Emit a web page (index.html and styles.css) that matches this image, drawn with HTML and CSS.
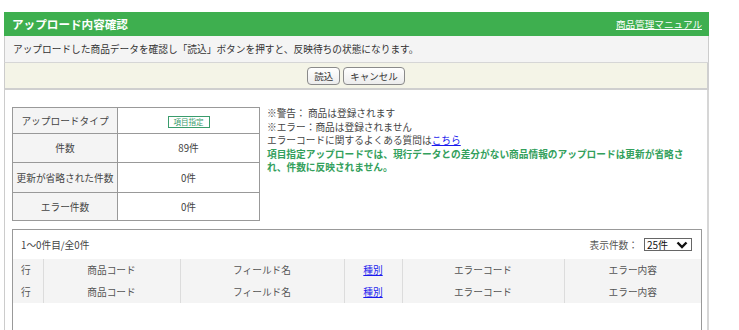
FILE: index.html
```html
<!DOCTYPE html>
<html lang="ja">
<head>
<meta charset="utf-8">
<link rel="stylesheet" href="styles.css">
</head>
<body>
<div class="panel">
  <div class="head">
    <h1 class="title">アップロード内容確認</h1>
    <a class="manual" href="#">商品管理マニュアル</a>
  </div>
  <div class="desc">アップロードした商品データを確認し「読込」ボタンを押すと、反映待ちの状態になります。</div>
  <div class="bar">
    <button class="btn">読込</button>
    <button class="btn">キャンセル</button>
  </div>
  <div class="content">
    <div class="summary">
      <table class="info">
        <tr class="r1"><th>アップロードタイプ</th><td><span class="tag">項目指定</span></td></tr>
        <tr class="r2"><th>件数</th><td>89件</td></tr>
        <tr class="r3"><th>更新が省略された件数</th><td>0件</td></tr>
        <tr class="r4"><th>エラー件数</th><td>0件</td></tr>
      </table>
      <div class="notes">
        <p>※警告： 商品は登録されます</p>
        <p>※エラー：商品は登録されません</p>
        <p>エラーコードに関するよくある質問は<a href="#">こちら</a></p>
        <p class="strong">項目指定アップロードでは、現行データとの差分がない商品情報のアップロードは更新が省略され、件数に反映されません。</p>
      </div>
    </div>
    <div class="listbox">
      <div class="listhead">
        <span>1～0件目/全0件</span>
        <label class="perpage">表示件数：
          <span class="sel">25件<svg width="12" height="8" viewBox="0 0 12 8"><path d="M1.5 1.5 L6 6 L10.5 1.5" fill="none" stroke="#111" stroke-width="2.4"/></svg></span>
        </label>
      </div>
      <table class="grid">
        <colgroup><col class="c1"><col class="c2"><col class="c3"><col class="c4"><col class="c5"><col class="c6"></colgroup>
        <tr><th class="first">行</th><th>商品コード</th><th>フィールド名</th><th><a href="#">種別</a></th><th>エラーコード</th><th>エラー内容</th></tr>
        <tr><th class="first">行</th><th>商品コード</th><th>フィールド名</th><th><a href="#">種別</a></th><th>エラーコード</th><th>エラー内容</th></tr>
      </table>
    </div>
  </div>
</div>
</body>
</html>
```

FILE: styles.css
```css
html, body { margin: 0; padding: 0; background: #fff; }
body {
  font-family: "Noto Sans CJK JP", "Noto Sans", sans-serif;
  font-size: 9.7px;
  color: #333;
  height: 330px;
  overflow: hidden;
}
.panel {
  width: 705px;
  margin: 12px 0 0 4px;
}
.head {
  background: #3eaf4f;
  height: 24px;
  display: flex;
  align-items: center;
  justify-content: space-between;
  padding: 0 7px 0 8px;
}
.title {
  margin: 0;
  color: #fff;
  font-size: 11.6px;
  font-weight: bold;
}
.manual { color: #fff; font-size: 9.6px; }
.desc {
  background: #f4f4f4;
  height: 26px;
  line-height: 26px;
  padding-left: 8px;
  border-left: 1px solid #ccc;
  border-right: 1px solid #ccc;
  border-bottom: 1px solid #d6d6d6;
}
.bar {
  background: #f4f4e7;
  height: 25px;
  border-left: 1px solid #ccc;
  border-right: 2px solid #cfcfcf;
  border-bottom: 2px solid #cfcfcf;
  display: flex;
  justify-content: center;
  align-items: center;
  gap: 3px;
}
.btn {
  font-family: inherit;
  font-size: 9.5px;
  color: #333;
  height: 18px;
  padding: 0 6px;
  border: 1px solid #8a8a8a;
  border-radius: 4px;
  background: linear-gradient(#ffffff, #ececec);
  line-height: 16px;
}
.content {
  border-left: 1px solid #ccc;
  border-right: 2px solid #d6d6d6;
  padding: 17px 5px 0 7px;
  height: 223px;
}
.summary { display: flex; gap: 7px; align-items: flex-start; }
.info {
  border-collapse: collapse;
  width: 248px;
  flex: none;
}
.info th, .info td {
  border: 1px solid #999;
  font-weight: normal;
  text-align: center;
  padding: 0;
  color: #444;
}
.info th { background: #f4f4f4; width: 104px; }
.info .r1 { height: 26px; }
.info .r2 { height: 29px; }
.info .r3 { height: 30px; }
.info .r4 { height: 28px; }
.tag {
  display: inline-block;
  vertical-align: middle;
  border: 1px solid #3a9c6c;
  color: #3a9c6c;
  font-size: 7.5px;
  padding: 0 5px;
  height: 10px;
  line-height: 10px;
}
.notes { line-height: 13.6px; }
.notes p { margin: 0; color: #444; }
.notes a { color: #1a1aee; }
.notes .strong { color: #33a05c; font-weight: bold; }
.listbox {
  margin-top: 8px;
  border: 1px solid #999;
  border-bottom: none;
  height: 102px;
}
.listhead {
  height: 29px;
  display: flex;
  justify-content: space-between;
  align-items: center;
  padding: 0 9px 0 8px;
  color: #444;
}
.perpage { display: flex; align-items: center; gap: 6px; color: #555; }
.sel {
  display: inline-flex;
  align-items: center;
  justify-content: space-between;
  width: 41px;
  height: 11px;
  border: 1px solid #666;
  padding: 0 3px 0 2px;
  color: #111;
  font-size: 10px;
}
.grid {
  width: 100%;
  border-collapse: collapse;
  table-layout: fixed;
  background: #f4f4f4;
}
.c1 { width: 30px; } .c2 { width: 137px; } .c3 { width: 164px; }
.c4 { width: 58px; } .c5 { width: 162px; }
.grid th {
  font-weight: normal;
  color: #555;
  height: 22px;
  padding: 0;
  text-align: center;
  border-left: 1px solid #dcdcdc;
}
.grid th.first { border-left: none; text-align: left; padding-left: 8px; }
.grid a { color: #1a1aee; }
```
